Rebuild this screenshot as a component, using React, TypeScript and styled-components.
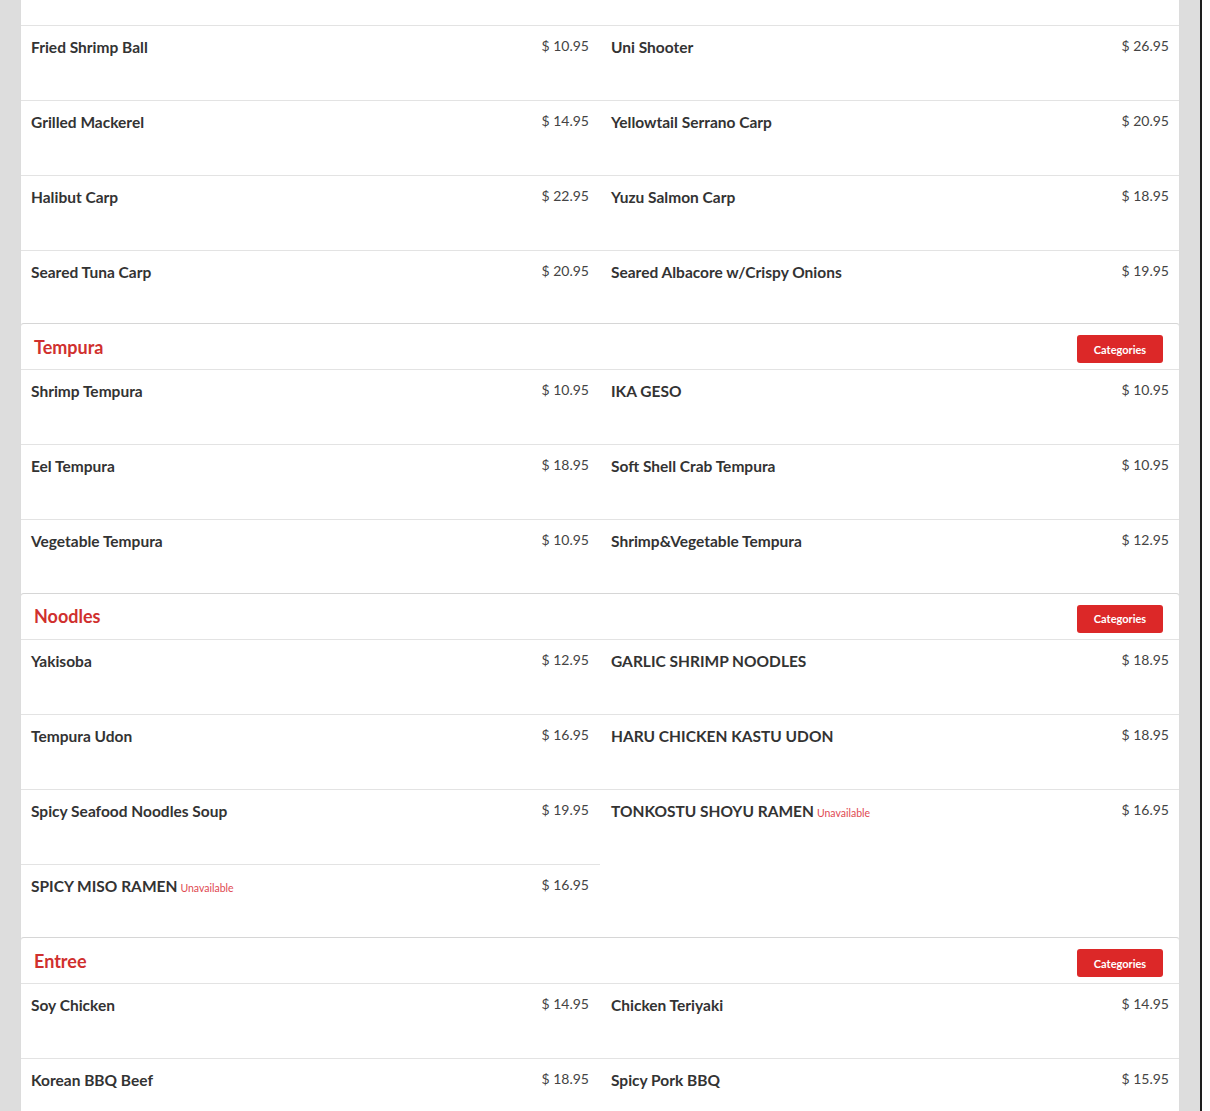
import React from "react";
import styled, { createGlobalStyle } from "styled-components";

const GlobalStyle = createGlobalStyle`
  html, body {
    margin: 0;
    padding: 0;
    background: #ffffff;
    font-family: Lato, "Open Sans", Arial, sans-serif;
  }
  * { box-sizing: border-box; }
`;

type Item = { name: string; price: string; unavailable?: boolean };
type Section = { title?: string; items: Item[]; continued?: boolean };

const sections: Section[] = [
  {
    continued: true,
    items: [
      { name: "Fried Shrimp Ball", price: "$ 10.95" },
      { name: "Uni Shooter", price: "$ 26.95" },
      { name: "Grilled Mackerel", price: "$ 14.95" },
      { name: "Yellowtail Serrano Carp", price: "$ 20.95" },
      { name: "Halibut Carp", price: "$ 22.95" },
      { name: "Yuzu Salmon Carp", price: "$ 18.95" },
      { name: "Seared Tuna Carp", price: "$ 20.95" },
      { name: "Seared Albacore w/Crispy Onions", price: "$ 19.95" },
    ],
  },
  {
    title: "Tempura",
    items: [
      { name: "Shrimp Tempura", price: "$ 10.95" },
      { name: "IKA GESO", price: "$ 10.95" },
      { name: "Eel Tempura", price: "$ 18.95" },
      { name: "Soft Shell Crab Tempura", price: "$ 10.95" },
      { name: "Vegetable Tempura", price: "$ 10.95" },
      { name: "Shrimp&Vegetable Tempura", price: "$ 12.95" },
    ],
  },
  {
    title: "Noodles",
    items: [
      { name: "Yakisoba", price: "$ 12.95" },
      { name: "GARLIC SHRIMP NOODLES", price: "$ 18.95" },
      { name: "Tempura Udon", price: "$ 16.95" },
      { name: "HARU CHICKEN KASTU UDON", price: "$ 18.95" },
      { name: "Spicy Seafood Noodles Soup", price: "$ 19.95" },
      { name: "TONKOSTU SHOYU RAMEN", price: "$ 16.95", unavailable: true },
      { name: "SPICY MISO RAMEN", price: "$ 16.95", unavailable: true },
    ],
  },
  {
    title: "Entree",
    items: [
      { name: "Soy Chicken", price: "$ 14.95" },
      { name: "Chicken Teriyaki", price: "$ 14.95" },
      { name: "Korean BBQ Beef", price: "$ 18.95" },
      { name: "Spicy Pork BBQ", price: "$ 15.95" },
    ],
  },
];

const Page = styled.div`
  width: 1202px;
  min-height: 100vh;
  background: #dddddd;
  padding: 0 20px;
  border-right: 2px solid #1e1e1e;
  overflow: hidden;
`;

const Card = styled.section<{ $continued?: boolean }>`
  background: #ffffff;
  border: 1px solid #dcdcdc;
  border-bottom: none;
  border-top: ${(p) => (p.$continued ? "none" : "1px solid #d6d6d6")};
  border-radius: ${(p) => (p.$continued ? "0" : "4px 4px 0 0")};
  padding-top: ${(p) => (p.$continued ? "25px" : "0")};
  margin-bottom: ${(p) => (p.$continued ? "-2px" : "-1.5px")};
`;

const Header = styled.div`
  height: 45px;
  display: flex;
  align-items: center;
  justify-content: space-between;
  padding: 0 16px 0 13px;
`;

const Title = styled.h2`
  margin: 0;
  font-size: 18px;
  font-weight: 700;
  color: #d0302e;
  letter-spacing: 0;
`;

const CategoriesButton = styled.button`
  height: 28px;
  width: 86px;
  margin-top: 5px;
  border: none;
  border-radius: 3px;
  background: #dc2828;
  color: #ffffff;
  font-family: Lato, Arial, sans-serif;
  font-size: 11px;
  font-weight: 700;
  padding: 0;
  cursor: pointer;
`;

const Grid = styled.div`
  display: grid;
  grid-template-columns: 1fr 1fr;
`;

const Cell = styled.div`
  height: 75px;
  border-top: 1px solid #e3e3e3;
  display: flex;
  justify-content: space-between;
  align-items: flex-start;
  padding: 11px 11px 0 10px;
  &:nth-child(even) {
    padding-left: 11px;
    padding-right: 10px;
  }
`;

const Name = styled.div`
  font-size: 15.5px;
  font-weight: 700;
  color: #333333;
  line-height: 20px;
`;

const Unavailable = styled.span`
  font-size: 10.5px;
  font-weight: 400;
  color: #e04a52;
  margin-left: 3px;
`;

const Price = styled.div`
  font-size: 14px;
  font-weight: 400;
  color: #444444;
  line-height: 18px;
`;

export default function App() {
  return (
    <>
      <GlobalStyle />
      <Page>
        {sections.map((s, i) => (
          <Card key={i} $continued={s.continued}>
            {s.title && (
              <Header>
                <Title>{s.title}</Title>
                <CategoriesButton>Categories</CategoriesButton>
              </Header>
            )}
            <Grid>
              {s.items.map((it) => (
                <Cell key={it.name}>
                  <Name>
                    {it.name}
                    {it.unavailable && <Unavailable>Unavailable</Unavailable>}
                  </Name>
                  <Price>{it.price}</Price>
                </Cell>
              ))}
            </Grid>
          </Card>
        ))}
      </Page>
    </>
  );
}
